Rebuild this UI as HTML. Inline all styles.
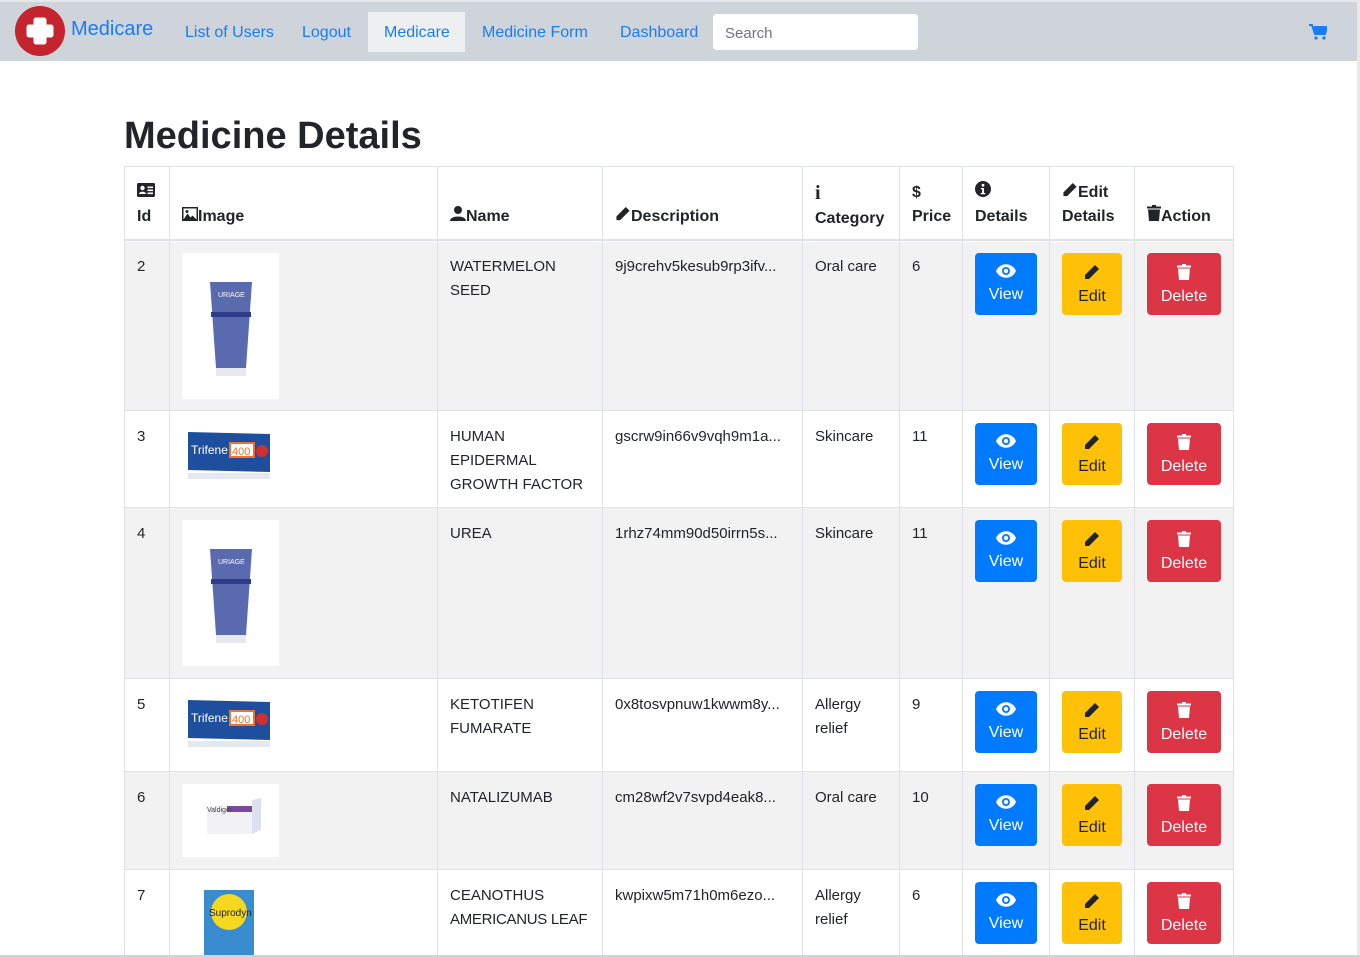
<!DOCTYPE html>
<html><head><meta charset="utf-8"><style>
*{box-sizing:border-box;margin:0;padding:0}
html,body{overflow:hidden}
body{width:1360px;height:957px;background:#fff;font-family:"Liberation Sans",sans-serif;color:#212529;position:relative}
.nav{position:absolute;left:0;top:2px;width:1358px;height:59px;background:#cfd4db}
.topline{position:absolute;left:0;top:0;width:1360px;height:2px;background:#e6e8eb}
.a{position:absolute;color:#1a7cf5;font-size:16px}
.abs{position:absolute}
.cell{position:absolute;border-right:1px solid #dee2e6;border-bottom:1px solid #dee2e6;padding:14px 12px 12px 13px;font-size:15px;line-height:24px}
.th{font-weight:bold;font-size:16px;line-height:24px}
.btn{position:absolute;border-radius:4px;font-size:16px;text-align:center;color:#fff}
.btn svg{display:block;margin:11px auto 8px}
.v{background:#007bff;width:62px;height:62px}
.e{background:#ffc107;width:60px;height:62px;color:#212529}
.d{background:#dc3545;width:74px;height:62px}
.imgbox{position:absolute;background:#fff}
</style></head><body>
<div class="topline"></div>
<div class="nav">
  <svg class="abs" style="left:15px;top:4px" width="50" height="50" viewBox="0 0 50 50"><circle cx="25" cy="25" r="25" fill="#c3242d"/><path d="M21 14h8v7h7v8h-7v7h-8v-7h-7v-8h7z" fill="#fff" stroke="#fff" stroke-width="5" stroke-linejoin="round"/></svg>
  <div class="a" style="left:71px;top:16px;font-size:20px">Medicare</div>
  <div class="a" style="left:185px;top:22px">List of Users</div>
  <div class="a" style="left:302px;top:22px">Logout</div>
  <div class="abs" style="left:368px;top:10px;width:97px;height:40px;background:#eeeff1"></div>
  <div class="a" style="left:384px;top:22px">Medicare</div>
  <div class="a" style="left:482px;top:22px">Medicine Form</div>
  <div class="a" style="left:620px;top:22px">Dashboard</div>
  <div class="abs" style="left:713px;top:12px;width:205px;height:36px;background:#fff;border-radius:4px;font-size:15px;color:#6c757d;padding:11px 12px">Search</div>
  <svg class="abs" style="left:1309px;top:22px" width="18" height="16" viewBox="0 0 18 16"><path d="M0 1h3l3 9h10l2-7H5" fill="none" stroke="#1a7cf5" stroke-width="2"/><path d="M5 3h13l-2 7H6z" fill="#1a7cf5"/><circle cx="7" cy="14" r="1.6" fill="#1a7cf5"/><circle cx="15" cy="14" r="1.6" fill="#1a7cf5"/></svg>
</div>
<div class="abs" style="left:1357px;top:0;width:3px;height:957px;background:#e9e9e9"></div>
<div class="abs" style="left:124px;top:115px;font-size:38px;font-weight:bold">Medicine Details</div>

<div class="abs" style="left:124px;top:166px;width:1110px;height:800px;border-left:1px solid #dee2e6;border-top:1px solid #dee2e6"></div>
<div class="abs" style="left:125px;top:242px;width:1108px;height:169px;background:#f2f2f2"></div>
<div class="abs" style="left:125px;top:508px;width:1108px;height:171px;background:#f2f2f2"></div>
<div class="abs" style="left:125px;top:772px;width:1108px;height:98px;background:#f2f2f2"></div>
<div class="abs" style="left:124px;top:239px;width:1110px;height:2px;background:#dee2e6"></div>

<div id="t"></div>
<script>
var cols=[124,169,437,602,802,899,962,1049,1134,1233];
var rows=[166,241,411,508,679,772,870,970];
var H=[['<svg width="18" height="14" viewBox="0 0 18 14"><rect width="18" height="14" rx="1.5" fill="#212529"/><circle cx="5.5" cy="5" r="2.2" fill="#fff"/><path d="M2 11c0-3 7-3 7 0z" fill="#fff"/><rect x="10.5" y="3.5" width="5.5" height="1.6" fill="#fff"/><rect x="10.5" y="6.5" width="5.5" height="1.6" fill="#fff"/><rect x="10.5" y="9.5" width="5.5" height="1.6" fill="#fff"/></svg><br>Id'],
['<br><svg width="16" height="14" viewBox="0 0 16 14"><rect width="16" height="14" fill="#212529"/><rect x="1.5" y="1.5" width="13" height="11" fill="#fff"/><path d="M1.5 12.5l4-6 3 4 2-2 4 4z" fill="#212529"/><circle cx="5" cy="4.5" r="1.5" fill="#212529"/></svg>Image'],
['<br><svg width="16" height="15" viewBox="0 0 16 15"><circle cx="8" cy="4" r="4" fill="#212529"/><path d="M0 15c0-6 16-6 16 0z" fill="#212529"/></svg>Name'],
['<br><svg width="16" height="15" viewBox="0 0 16 16"><path d="M11 1l4 4-10 10H1v-4z" fill="#212529"/></svg>Description'],
['<span style="font-family:Liberation Serif;font-size:20px">i</span><br>Category'],
['$<br>Price'],
['<svg width="16" height="16" viewBox="0 0 16 16"><circle cx="8" cy="8" r="8" fill="#212529"/><circle cx="8" cy="4.3" r="1.4" fill="#fff"/><path d="M6 7h3v5h1.3v1.3H5.7V12H7V8.3H6z" fill="#fff"/></svg><br>Details'],
['<svg width="16" height="15" viewBox="0 0 16 16"><path d="M11 1l4 4-10 10H1v-4z" fill="#212529"/></svg>Edit<br>Details'],
['<br><svg width="14" height="16" viewBox="0 0 14 16"><rect x="0" y="1.5" width="14" height="2" fill="#212529"/><rect x="5" y="0" width="4" height="2" fill="#212529"/><path d="M1 4.5h12l-1 11.5H2z" fill="#212529"/></svg>Action']];
var D=[['2','tube','WATERMELON<br>SEED','9j9crehv5kesub9rp3ifv...','Oral care','6'],
['3','tri','HUMAN<br>EPIDERMAL<br>GROWTH FACTOR','gscrw9in66v9vqh9m1a...','Skincare','11'],
['4','tube','UREA','1rhz74mm90d50irrn5s...','Skincare','11'],
['5','tri','KETOTIFEN<br>FUMARATE','0x8tosvpnuw1kwwm8y...','Allergy<br>relief','9'],
['6','box','NATALIZUMAB','cm28wf2v7svpd4eak8...','Oral care','10'],
['7','sup','CEANOTHUS<br><span style="letter-spacing:-0.3px">AMERICANUS LEAF</span>','kwpixw5m71h0m6ezo...','Allergy<br>relief','6']];
var eye='<svg width="20" height="14" viewBox="0 0 20 14"><path d="M0 7C4-2 16-2 20 7C16 16 4 16 0 7z" fill="#fff"/><circle cx="10" cy="7" r="4" fill="#007bff"/><circle cx="10" cy="7" r="2.2" fill="#fff"/></svg>';
var pen='<svg width="16" height="16" viewBox="0 0 16 16"><path d="M11 1l4 4-10 10H1v-4z" fill="#212529"/></svg>';
var tr='<svg width="14" height="16" viewBox="0 0 14 16"><rect x="0" y="1.5" width="14" height="2" fill="#fff"/><rect x="5" y="0" width="4" height="2" fill="#fff"/><path d="M1 4.5h12l-1 11.5H2z" fill="#fff"/></svg>';
function img(t,x,y){
 if(t=='tube')return '<div class="imgbox" style="left:'+x+'px;top:'+y+'px;width:97px;height:146px"><svg width="97" height="146"><path d="M28 29h42l-6 86H34z" fill="#5a6aaf"/><rect x="29" y="59" width="40" height="5" fill="#2c3d8a"/><rect x="34" y="115" width="30" height="8" fill="#e8e8ef"/><text x="36" y="44" font-size="7" fill="#fff" font-family="Liberation Sans">URIAGE</text></svg></div>';
 if(t=='tri')return '<svg class="abs" style="left:'+(x+6)+'px;top:'+(y+4)+'px" width="90" height="56"><path d="M0 5l82 2v38l-82-2z" fill="#1e4f9e"/><rect x="42" y="16" width="24" height="14" fill="#fff" stroke="#f07030" stroke-width="2"/><circle cx="74" cy="24" r="6" fill="#d03030"/><text x="3" y="27" font-size="12" fill="#fff" font-family="Liberation Sans">Trifene</text><text x="44" y="28" font-size="11" fill="#f07030" font-family="Liberation Sans">400</text><rect x="0" y="46" width="82" height="6" fill="#e4e8f0"/></svg>';
 if(t=='box')return '<div class="imgbox" style="left:'+x+'px;top:'+y+'px;width:97px;height:73px"><svg width="97" height="73"><path d="M25 22h45v28H25z" fill="#f2f2f6"/><path d="M70 16l9-2v32l-9 4z" fill="#dde0ee"/><rect x="45" y="22" width="25" height="6" fill="#7a4a9a"/><text x="25" y="28" font-size="7" fill="#444" font-family="Liberation Sans">Valdiger</text></svg></div>';
 return '<svg class="abs" style="left:'+(x+22)+'px;top:'+(y+8)+'px" width="52" height="70"><rect width="50" height="70" fill="#3a8cd0"/><circle cx="25" cy="22" r="18" fill="#f6d820"/><text x="5" y="26" font-size="10" fill="#222" font-family="Liberation Sans">Suprodyn</text></svg>';
}
var h='';
for(var c=0;c<9;c++){h+='<div class="cell th" style="left:'+cols[c]+'px;top:'+rows[0]+'px;width:'+(cols[c+1]-cols[c]+1)+'px;height:74px;padding-top:15px">'+H[c][0]+'</div>';}
for(var r=0;r<6;r++){var y=rows[r+1],hh=rows[r+2]-y;
 for(var c=0;c<9;c++){var txt='';var d=D[r];
  if(c==0)txt=d[0];else if(c>=2&&c<=5)txt=d[c];
  h+='<div class="cell" style="left:'+cols[c]+'px;top:'+y+'px;width:'+(cols[c+1]-cols[c]+1)+'px;height:'+hh+'px">'+txt+'</div>';}
 h+=img(D[r][1],182,y+12);
 h+='<div class="btn v" style="left:975px;top:'+(y+12)+'px">'+eye+'View</div>';
 h+='<div class="btn e" style="left:1062px;top:'+(y+12)+'px">'+pen+'Edit</div>';
 h+='<div class="btn d" style="left:1147px;top:'+(y+12)+'px">'+tr+'Delete</div>';
}
document.getElementById('t').innerHTML=h;
</script>
<div class="abs" style="left:0;top:955px;width:1360px;height:2px;background:#cfd4db"></div>
</body></html>
